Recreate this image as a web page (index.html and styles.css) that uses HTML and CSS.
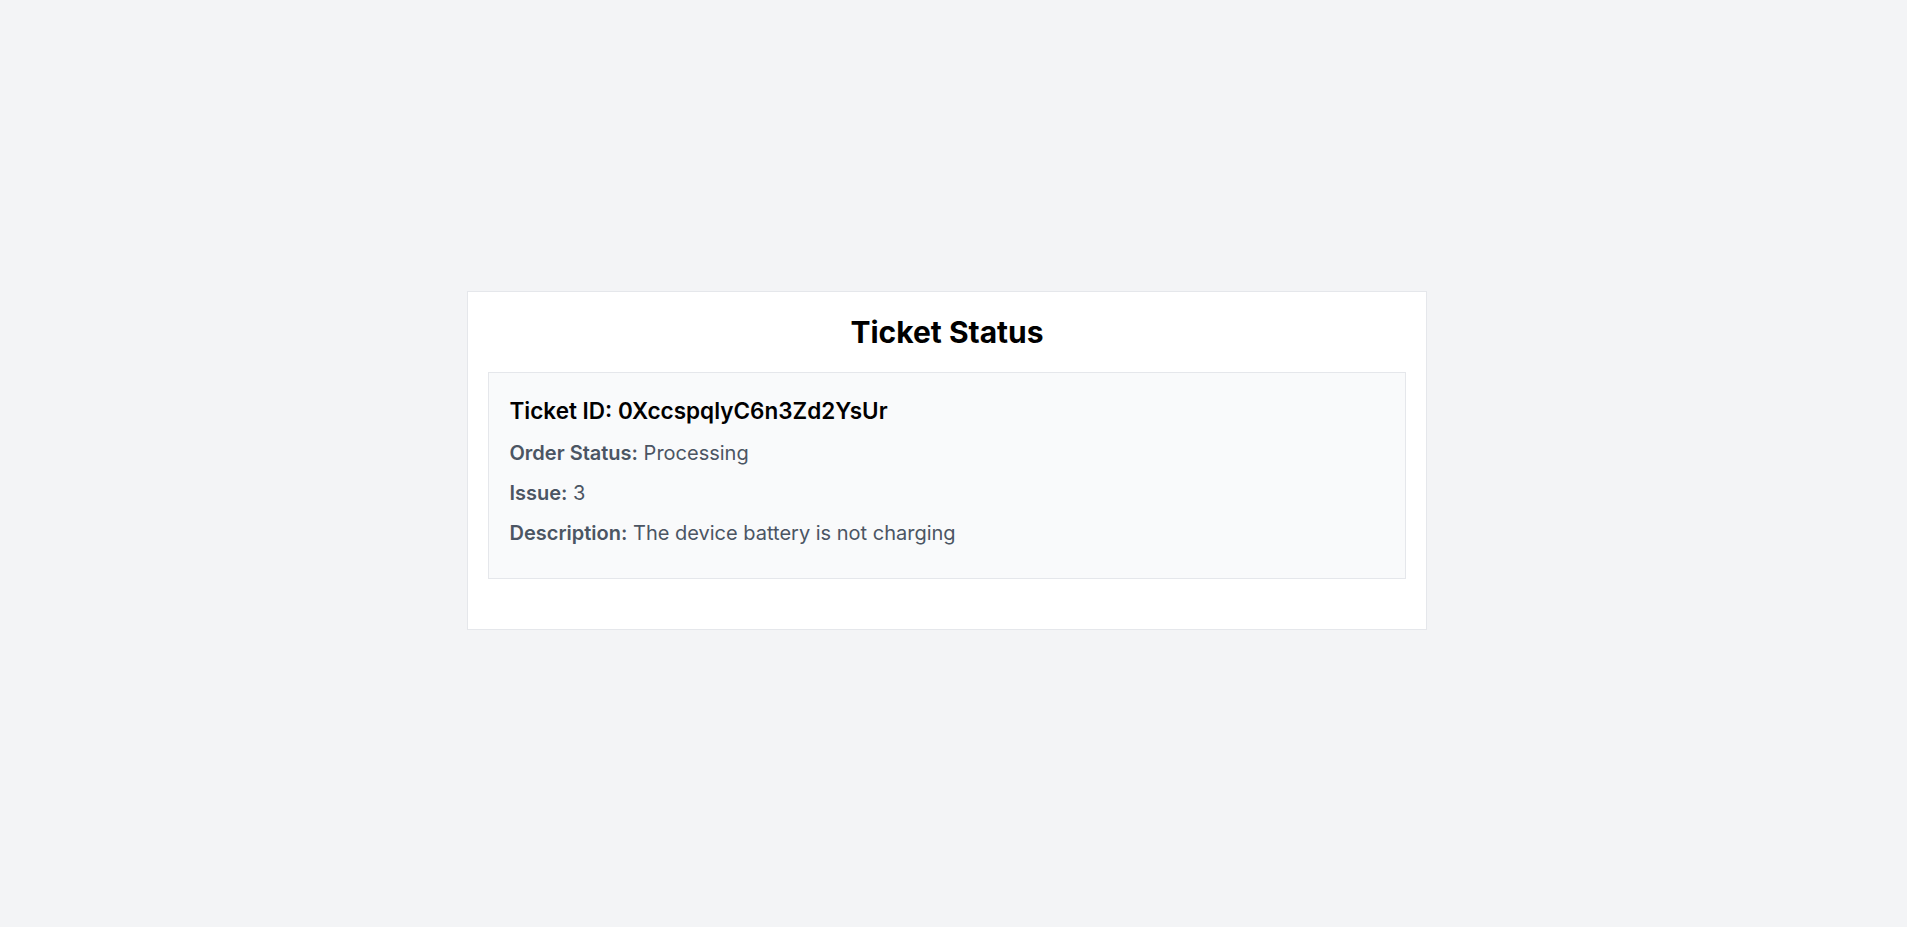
FILE: index.html
```html
<!DOCTYPE html>
<html lang="en">
<head>
<meta charset="utf-8">
<title>Ticket Status</title>
<link rel="stylesheet" href="styles.css">
</head>
<body>
<main class="page">
  <section class="card">
    <h1 class="title">Ticket Status</h1>
    <div class="ticket">
      <h2 class="ticket-id">Ticket ID: 0XccspqlyC6n3Zd2YsUr</h2>
      <p class="row"><span class="label">Order Status:</span> Processing</p>
      <p class="row"><span class="label">Issue:</span> 3</p>
      <p class="row"><span class="label">Description:</span> The device battery is not charging</p>
    </div>
  </section>
</main>
</body>
</html>
```
FILE: styles.css
```css
html, body {
  margin: 0;
  padding: 0;
}
body {
  background: #f3f4f6;
  font-family: Inter, "Noto Sans", sans-serif;
  min-height: 927px;
}
.page {
  padding: 291px 0 0 467px;
}
.card {
  box-sizing: border-box;
  width: 960px;
  height: 339px;
  background: #ffffff;
  border: 1px solid #e5e7eb;
  padding: 20px 20px 0 20px;
}
.title {
  margin: 0 0 20px 0;
  font-size: 30px;
  line-height: 40px;
  font-weight: 700;
  color: #000;
  text-align: center;
}
.ticket {
  box-sizing: border-box;
  height: 207px;
  background: #f9fafb;
  border: 1px solid #e5e7eb;
  padding: 22px 20px 0 20.5px;
}
.ticket-id {
  margin: 0 0 11.7px 0;
  font-size: 22.5px;
  line-height: 32px;
  font-weight: 600;
  color: #000;
}
.row {
  margin: 0 0 12px 0;
  font-size: 20px;
  line-height: 28px;
  color: #4b5563;
}
.label {
  font-weight: 600;
}
```
